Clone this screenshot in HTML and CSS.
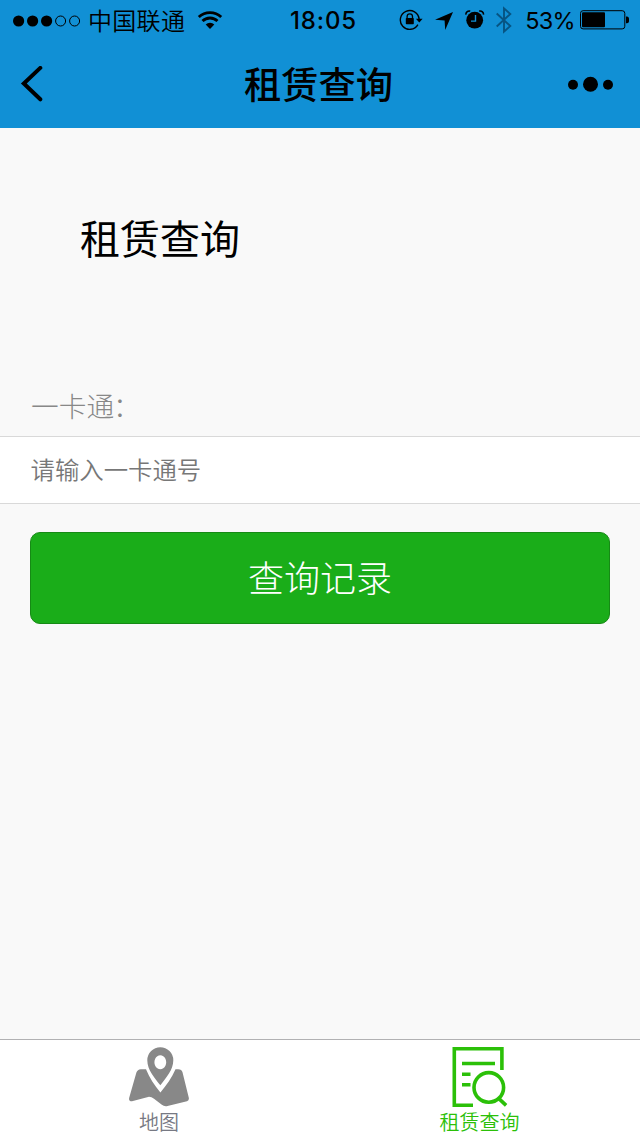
FILE: index.html
```html
<!DOCTYPE html>
<html lang="zh-CN">
<head>
<meta charset="utf-8">
<title>租赁查询</title>
<link rel="stylesheet" href="styles.css">
</head>
<body>
<div class="screen">
  <header class="header">
    <div class="status">
      <div class="status-left">
        <svg class="signal" width="70" height="14" viewBox="0 0 70 14">
          <circle cx="6.6" cy="7" r="5.6"/><circle cx="20.6" cy="7" r="5.6"/><circle cx="34.6" cy="7" r="5.6"/>
          <g fill="none" stroke="#000"><circle cx="48.6" cy="7" r="5"/><circle cx="62.6" cy="7" r="5"/></g>
        </svg>
        <span class="carrier">中国联通</span>
        <svg class="wifi" width="26" height="20" viewBox="0 0 26 20">
          <g fill="none" stroke="#000" stroke-width="2.8"><path d="M1.8 7.1a16 16 0 0 1 22.4 0"/><path d="M5.5 11.1a10.6 10.6 0 0 1 15 0"/></g>
          <path d="M8.7 14.5a6.1 6.1 0 0 1 8.6 0L13 19z"/>
        </svg>
      </div>
      <span class="time">18:05</span>
      <div class="status-right">
        <svg class="lock" width="25" height="22" viewBox="0 0 25 22">
          <path d="M18.9 15.6a9.4 9.4 0 1 1 1.2-5.5" fill="none" stroke="#000" stroke-width="1.4"/>
          <path d="M16.9 9.8h6.7l-3.3 3.8z"/>
          <path d="M8.1 9.5V7.6a2.7 2.7 0 0 1 5.4 0v1.9" fill="none" stroke="#000" stroke-width="1.3"/>
          <rect x="6.8" y="9" width="8" height="6.3" rx=".7"/>
        </svg>
        <svg class="location" width="18" height="18" viewBox="0 0 18 18"><path d="M18 0 10.2 18 9.6 8.5 0 7.7z"/></svg>
        <svg class="alarm" width="20" height="19" viewBox="0 0 20 19">
          <circle cx="9.7" cy="10.2" r="8.4"/>
          <path d="M1 4.6C.6 2.4 2.6.6 5.2 1.1M18.4 4.6C18.8 2.4 16.8.6 14.2 1.1" fill="none" stroke="#000" stroke-width="1.6"/>
          <path d="M10.5 5.1v6H6" fill="none" stroke="#1190d5" stroke-width="1.4"/>
        </svg>
        <svg class="bluetooth" width="16" height="28" viewBox="0 0 16 28"><path d="M.7 7.5 14.3 20 8 25.7V2.3L14.3 8 .7 20.5" fill="none" stroke="#075482" stroke-width="1.9"/></svg>
        <span class="percent">53%</span>
        <svg class="battery" width="49" height="20" viewBox="0 0 49 20">
          <rect x=".5" y=".7" width="44.3" height="18.2" rx="2.6" fill="none" stroke="#000"/>
          <rect x="2" y="2.3" width="23" height="15" rx="1"/>
          <path d="M46 6.5h1c1 0 2 1 2 2v2.8c0 1-1 2-2 2h-1z"/>
        </svg>
      </div>
    </div>
    <div class="nav">
      <svg width="24" height="36" viewBox="0 0 24 36"><path d="M20.3 1.9 3.8 17.5 20.3 33.3" fill="none" stroke="#000" stroke-width="4" stroke-linecap="round"/></svg>
      <span class="nav-title">租赁查询</span>
      <svg width="46" height="16" viewBox="0 0 46 16"><circle cx="5" cy="8.8" r="5"/><circle cx="22.5" cy="8.3" r="7.5"/><circle cx="40" cy="8.8" r="5"/></svg>
    </div>
  </header>
  <main class="content">
    <h1 class="page-title">租赁查询</h1>
    <div class="label">一卡通<span class="colon">：</span></div>
    <div class="field">请输入一卡通号</div>
    <div class="button">查询记录</div>
  </main>
  <nav class="tabs">
    <div class="tab">
      <svg class="tab-icon" width="60" height="60" viewBox="0 0 60 60" fill="#888">
        <path fill-rule="evenodd" d="M31.3 38.3C25.5 30.5 18.3 23 18.3 13.2a13 13 0 0 1 26 0C44.3 23 37.1 30.5 31.3 38.3zM31.3 8.3a5.9 7 0 1 0 .01 0z"/>
        <path d="M17 22.2h-5.2q-3.3.2-4.4 3.4L.2 50.8q-.8 3.6 2.8 3.5L20 49.8q2.5 0 5 2l7.5 5.8q3 2.3 6 1.4L58 54.2q2.3-.8 1.8-3.4L53.5 25.2q-.8-3-4.3-3h-2.7C42.8 31 37.3 38.3 31.4 45.5 25.5 38.3 20.5 31 17 22.2z"/>
      </svg>
      <span>地图</span>
    </div>
    <div class="tab tab-active">
      <svg class="tab-icon" width="60" height="60" viewBox="0 0 60 60" fill="none" stroke="#2bc008" stroke-width="3.6">
        <path d="M23 58.2H4.3V1.8h47.6V23"/><path d="M12 16.5h33M12 27.2h8.5M12 37.8h8.5" stroke-width="3.4"/>
        <circle cx="38.8" cy="40.4" r="14.8"/><path d="M48.6 51.4l7.5 7"/>
      </svg>
      <span>租赁查询</span>
    </div>
  </nav>
</div>
</body>
</html>
```
FILE: styles.css
```css
* { box-sizing: border-box; }
body { margin: 0; font-family: "Noto Sans CJK SC", sans-serif; color: #000; }
svg { display: block; flex: none; }
.screen { width: 640px; height: 1136px; display: flex; flex-direction: column; background: #f9f9f9; }
.header { height: 128px; background: #1190d5; }
.status { height: 40px; display: grid; grid-template-columns: 1fr auto 1fr; grid-template-rows: 40px; align-items: center; padding: 0 11px 0 12px; }
.status-left, .status-right { display: flex; align-items: center; height: 40px; }
.status-left { padding-top: 1px; }
.status-right { justify-content: flex-end; padding-top: 1px; }
.carrier { margin-left: 6px; font-size: 24px; line-height: 36px; letter-spacing: .3px; font-weight: 350; padding-bottom: 2px; }
.wifi { margin-left: 12px; margin-top: -2px; }
.time { font: 500 24px/40px Inter, sans-serif; letter-spacing: .9px; padding: 2px 0 0 6px; }
.lock { margin-top: -2px; }
.location { margin-left: 11px; }
.alarm { margin-left: 12px; margin-top: -2px; }
.bluetooth { margin-left: 11px; margin-top: -1px; }
.percent { margin-left: 13px; font: 400 23.5px/38px Inter, sans-serif; letter-spacing: -.7px; padding-top: 1px; }
.battery { margin-left: 5px; margin-top: -1px; }
.nav { height: 88px; padding: 0 26px 0 20px; display: grid; grid-template-columns: 48px 1fr 48px; align-items: center; }
.nav-title { font-size: 37.3px; line-height: 84px; font-weight: 500; text-align: center; padding: 0 0 2px 3px; }
.nav > :last-child { justify-self: end; }
.content { flex: 1; }
.page-title { margin: 82px 80px 0; font-size: 40px; line-height: 55px; font-weight: 400; }
.label { margin-top: 113px; padding-left: 31px; height: 58px; font-size: 27.7px; line-height: 54px; font-weight: 300; color: #888; }
.colon { margin-left: -1px; }
.field { height: 68px; padding-left: 30.5px; border: solid #d9d9d9; border-width: 1px 0; background: #fff; font-size: 24.4px; line-height: 64px; font-weight: 350; color: #777; }
.button { height: 92px; margin: 28px 30px 0; border: 1px solid #168a15; border-radius: 10px; background: #1aad19; color: #fff; font-size: 36px; line-height: 86px; font-weight: 300; text-align: center; }
.tabs { height: 97px; display: flex; border-top: 1px solid #b1b1b3; background: #fff; }
.tab { width: 320px; padding: 7px 1px 0 0; display: flex; flex-direction: column; align-items: center; font-size: 20px; line-height: 30px; font-weight: 350; color: #777983; }
.tab:first-child { padding-right: 2px; }
.tab-active { color: #2bc008; }
```
